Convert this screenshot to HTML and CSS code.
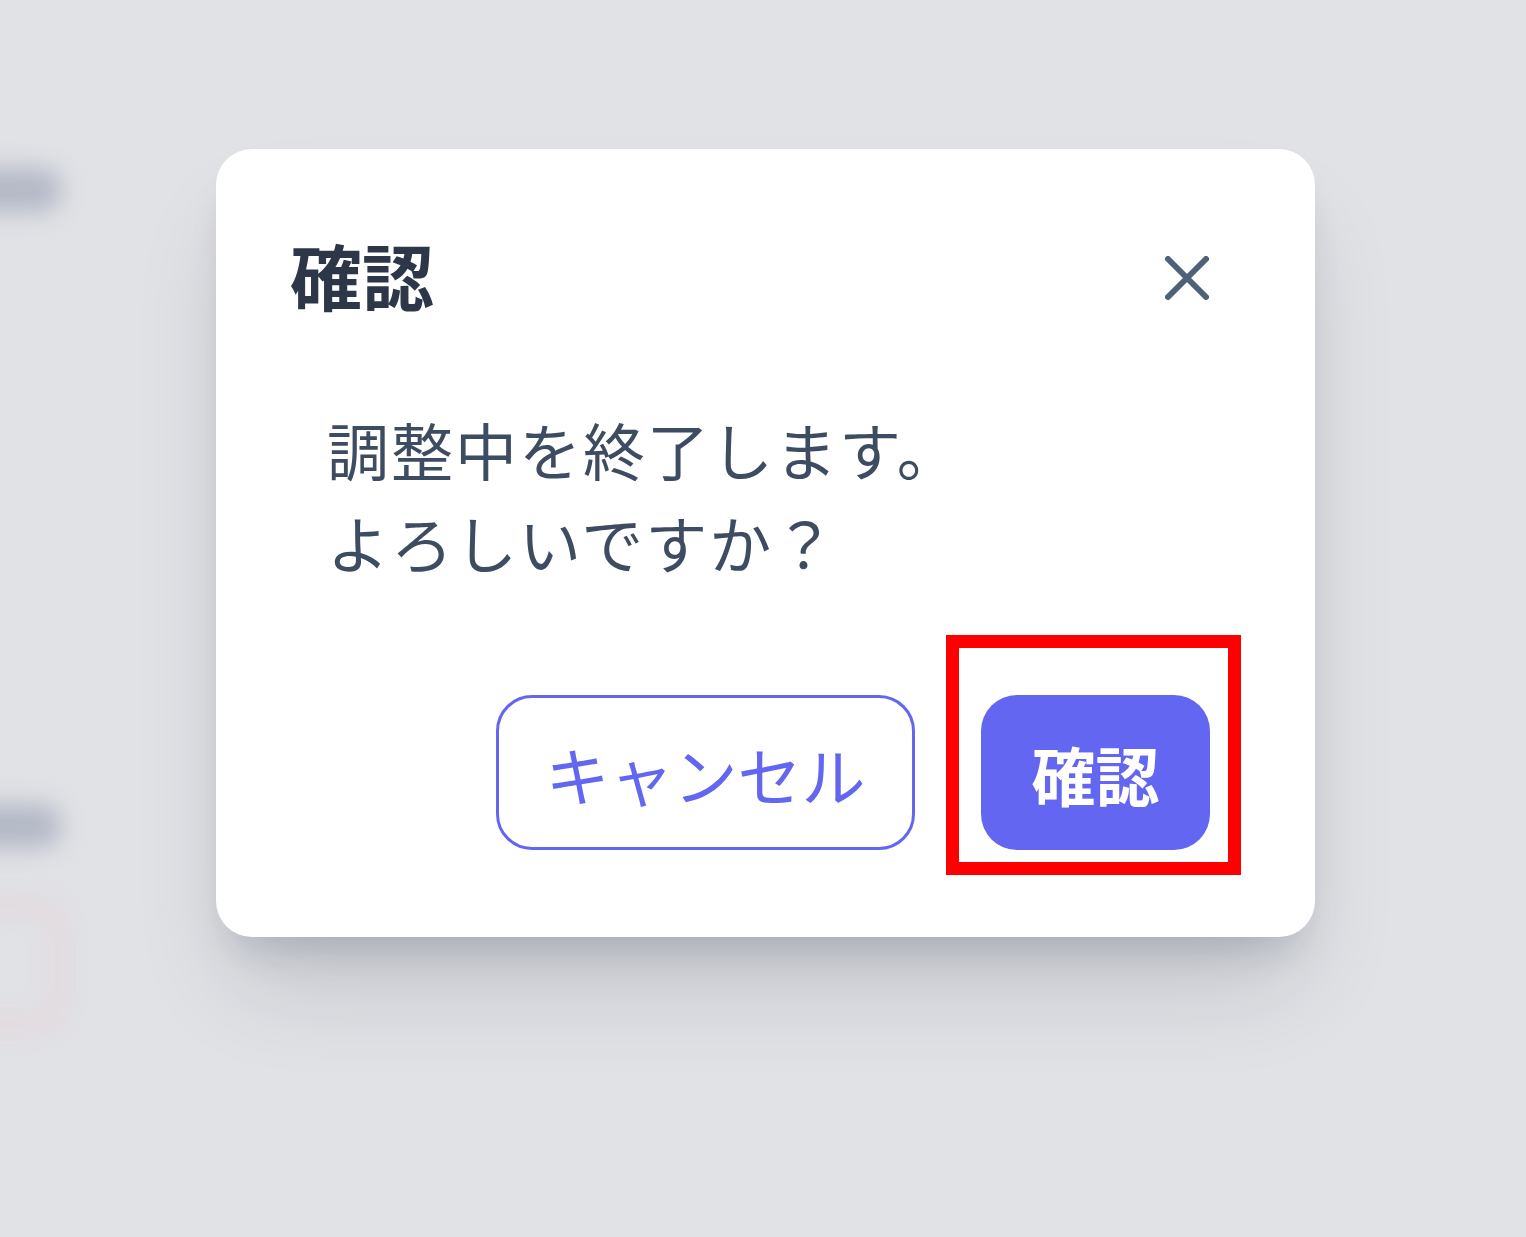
FILE: index.html
```html
<!DOCTYPE html>
<html lang="ja">
<head>
<meta charset="utf-8">
<title>確認</title>
<link rel="stylesheet" href="styles.css">
</head>
<body>
<div class="backdrop">
  <div class="blob blob-top"></div>
  <div class="blob blob-mid"></div>
  <div class="ghost-box"></div>
</div>
<div class="overlay">
  <div class="modal" role="dialog" aria-labelledby="modal-title">
    <div class="modal-header">
      <h2 id="modal-title" class="modal-title">確認</h2>
      <button class="close-btn" aria-label="閉じる">
        <svg viewBox="0 0 44 44" width="44" height="44" aria-hidden="true">
          <path d="M3 3L41 41M41 3L3 41" fill="none" stroke="currentColor" stroke-width="6" stroke-linecap="round"/>
        </svg>
      </button>
    </div>
    <p class="modal-body">調整中を終了します。<br>よろしいですか？</p>
    <div class="modal-footer">
      <button class="btn btn-outline">キャンセル</button>
      <button class="btn btn-primary">確認<span class="highlight"></span></button>
    </div>
  </div>
</div>
</body>
</html>
```
FILE: styles.css
```css
* { box-sizing: border-box; }
html, body { margin: 0; padding: 0; }
body {
  width: 1526px;
  height: 1237px;
  overflow: hidden;
  background: #e1e2e6;
  font-family: "Noto Sans CJK JP", "Noto Sans", sans-serif;
  position: relative;
}
.backdrop {
  display: flex;
  flex-direction: column;
  align-items: flex-start;
  margin-left: -50px;
  padding-top: 168px;
  filter: blur(12px);
}
.blob {
  width: 112px;
  height: 44px;
  border-radius: 22px;
  background: #b3b8c6;
}
.blob-mid { margin-top: 592px; }
.ghost-box {
  margin-top: 55px;
  width: 112px;
  height: 125px;
  border: 8px solid #e8cfd6;
  border-radius: 24px;
}
.overlay {
  position: absolute;
  inset: 0;
  padding: 149px 0 0 216px;
}
.modal {
  width: 1099px;
  height: 788px;
  background: #ffffff;
  border-radius: 36px;
  padding: 85px 105px 87px 74px;
  display: flex;
  flex-direction: column;
  box-shadow: 0 62px 100px -20px rgba(15, 23, 42, 0.16), 0 26px 40px -16px rgba(15, 23, 42, 0.16);
}
.modal-header {
  height: 80px;
  display: flex;
  align-items: center;
  justify-content: space-between;
  margin-right: 1px;
}
.close-btn { margin-top: 8px; }
.modal-title {
  margin: 0;
  font-size: 72px;
  line-height: 80px;
  font-weight: 700;
  color: #2d3748;
}
.close-btn {
  border: 0;
  background: none;
  padding: 0;
  width: 44px;
  height: 44px;
  color: #4f6079;
  display: flex;
}
.modal-body {
  margin: 89px 0 0 37px;
  font-size: 62px;
  line-height: 93px;
  letter-spacing: 2px;
  color: #3e4c62;
}
.modal-footer {
  margin-top: auto;
  display: flex;
  justify-content: flex-end;
  gap: 66px;
}
.btn {
  height: 155px;
  border-radius: 36px;
  font-family: inherit;
  font-size: 64px;
  line-height: 1;
  position: relative;
  cursor: pointer;
}
.btn-outline {
  width: 419px;
  background: #ffffff;
  border: 3px solid #6366f1;
  color: #6366f1;
}
.btn-primary {
  width: 229px;
  background: #6366f1;
  border: 0;
  color: #ffffff;
  font-weight: 700;
}
.highlight {
  position: absolute;
  top: -60px;
  left: -35px;
  right: -31px;
  bottom: -25px;
  border: 13px solid #ff0000;
  pointer-events: none;
}
```
